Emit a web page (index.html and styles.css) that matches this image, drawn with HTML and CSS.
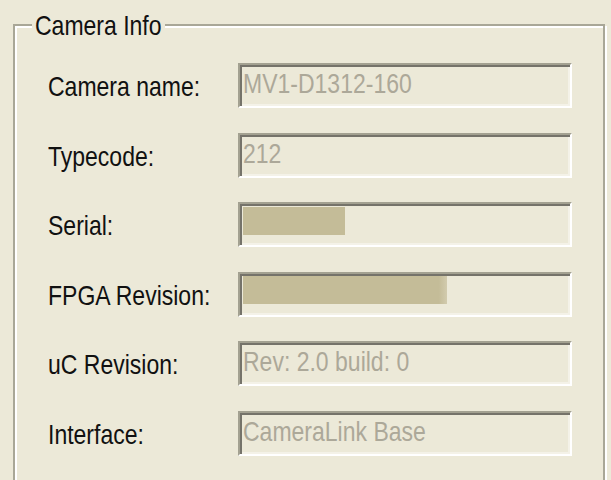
FILE: index.html
```html
<!DOCTYPE html>
<html lang="en">
<head>
<meta charset="utf-8">
<title>Camera Info</title>
<link rel="stylesheet" href="styles.css">
</head>
<body>
<fieldset class="group">
  <legend class="group-title"><span class="txt">Camera Info</span></legend>
  <div class="rows">
    <div class="label"><span class="txt">Camera name:</span></div>
    <div class="field"><span class="txt">MV1-D1312-160</span></div>

    <div class="label"><span class="txt">Typecode:</span></div>
    <div class="field"><span class="txt">212</span></div>

    <div class="label"><span class="txt">Serial:</span></div>
    <div class="field field-blob"><span class="blob blob-serial"></span></div>

    <div class="label"><span class="txt">FPGA Revision:</span></div>
    <div class="field field-blob"><span class="blob blob-fpga"></span></div>

    <div class="label"><span class="txt">uC Revision:</span></div>
    <div class="field"><span class="txt">Rev: 2.0 build: 0</span></div>

    <div class="label"><span class="txt">Interface:</span></div>
    <div class="field"><span class="txt">CameraLink Base</span></div>
  </div>
</fieldset>
</body>
</html>
```

FILE: styles.css
```css
html, body {
  margin: 0;
  padding: 0;
  height: 100%;
  overflow: hidden;
  background: #ECE9D8;
}

body {
  font-family: "Liberation Sans", Arial, sans-serif;
  font-size: 23px;
  color: #111;
}

.txt {
  display: inline-block;
  transform: scaleY(1.22);
  white-space: nowrap;
}

.group {
  box-sizing: border-box;
  width: 592px;
  height: 540px;
  margin: 10px 0 0 13px;
  padding: 0;
  border: 2px solid #A9A797;
  box-shadow: 2px 2px 0 #FFFFFF, inset 2px 2px 0 #FFFFFF;
}

.group-title {
  margin-left: 17px;
  padding: 0 3px;
  height: 30px;
  line-height: 30px;
  background: #ECE9D8;
  color: #111;
}

.rows {
  display: grid;
  grid-template-columns: 190px 334px;
  grid-auto-rows: 45px;
  row-gap: 24.6px;
  padding: 23px 0 0 33px;
}

.label {
  display: flex;
  align-items: center;
  padding-top: 2px;
}

.field {
  box-sizing: border-box;
  display: flex;
  align-items: center;
  padding: 0 0 4px 3px;
  border-style: solid;
  border-width: 2px;
  border-color: #A3A191 #FFFFFF #FFFFFF #A3A191;
  box-shadow: inset 2px 2px 0 #75736A, inset -2px -2px 0 #F4F2E8;
  color: #ACA899;
}

.field-blob {
  align-items: flex-start;
  padding: 2.5px 0 0 3px;
}

.blob {
  display: block;
  height: 28px;
  background: #C4BC98;
}

.blob-serial {
  width: 102px;
}

.blob-fpga {
  width: 204px;
  background: linear-gradient(to right, #C4BC98 96%, #D2CBAE);
}
```
